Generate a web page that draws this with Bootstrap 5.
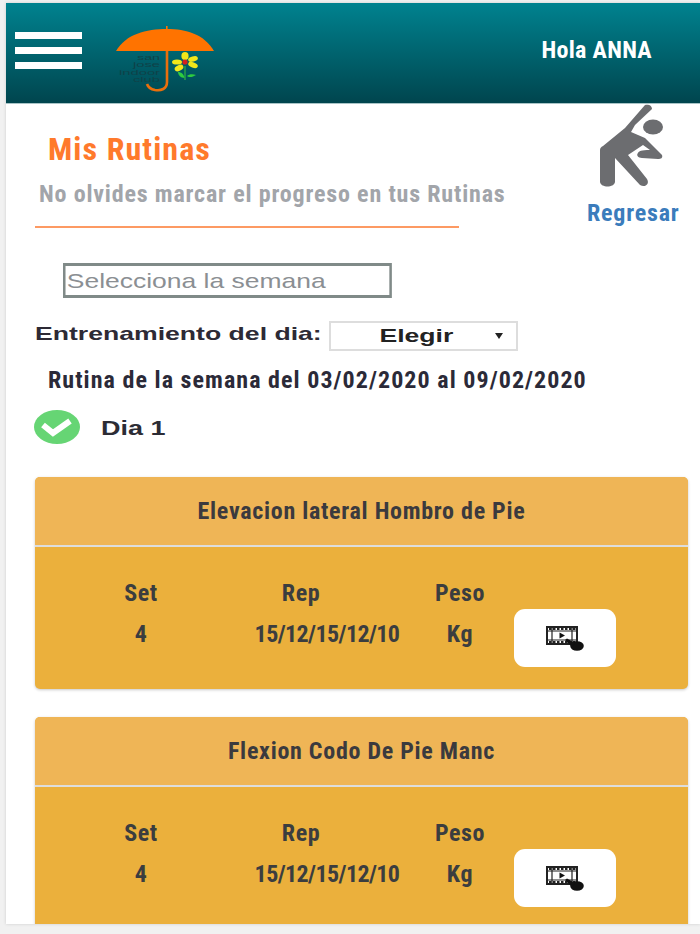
<!DOCTYPE html>
<html lang="es">
<head>
<meta charset="utf-8">
<title>Mis Rutinas</title>
<link href="https://cdn.jsdelivr.net/npm/bootstrap@5.3.0/dist/css/bootstrap.min.css" rel="stylesheet">
<style>
html,body{height:934px;overflow:hidden}
body{background:#f1f1f1;font-family:"Liberation Sans",Arial,sans-serif}
.shell{margin:3px 0 0 6px;height:921px;background:#fff;overflow:hidden;box-shadow:0 0 3px #ccc}
.topbar{height:101px;background:linear-gradient(#00828f,#00454e);padding:0 48px 0 9px;border-bottom:1px solid #a8c4c6}
.burger{width:67px;gap:8px;margin-top:-5px}
.burger span{display:block;height:7px;background:#fff}
.brandmark{width:99px;height:66px;margin-left:34px;margin-top:12px}
.cond{font-family:"Liberation Sans Narrow","Roboto Condensed",Roboto,sans-serif}
.hello{color:#fff;font-weight:700;font-size:24px;letter-spacing:.3px;margin-top:-6px}
.headrow{height:123px}
.headleft{padding:27px 0 0 29px;width:453px;flex:none}
.pagetitle{color:#ff7a2c;font-size:32px;font-weight:700;letter-spacing:1.1px;margin:0 0 0 13px;line-height:36px}
.pagesub{color:#a2a5aa;font-size:24px;font-weight:700;letter-spacing:.82px;margin:13px 0 0 4px;line-height:28px;white-space:nowrap}
.ruler{height:2px;background:#fd9a63;margin-top:18px;width:424px}
.backlink{width:92px;flex:none;margin:0 21px 0 0;color:#3b7cbc;font-size:24px;font-weight:700;text-decoration:none;letter-spacing:.8px;line-height:28px;white-space:nowrap}
.backlink svg{width:64px;height:84px;display:block;margin:0 0 11px 13px}
.weekfield{width:261px;height:35px;margin:36px 0 0 57px;border:3px solid #808a88;border-left-width:2.4px;border-right-width:2.4px;padding:0 1px;font-size:21px;line-height:1;border-radius:0;outline:0;transform:scaleX(1.26);transform-origin:left center}
.weekfield::placeholder{color:#8b8f93;opacity:1}
.dayrow{margin:23px 0 0 29px;height:30px}
.daylabel{font-weight:700;font-size:19px;color:#2d2a35;width:294px;flex:none;margin:0;padding-bottom:3px;white-space:nowrap}
.widen{display:inline-block;transform:scaleX(1.4);transform-origin:left center}
.daypick{width:189px;height:30px;flex:none;border:2px solid #ddd;background:#fff;position:relative;font-weight:700;font-size:19px;color:#222;padding:1px 14px 0 0}
.daypick .widen{transform-origin:center}
.daypick::after{content:"";position:absolute;right:13px;top:10px;border:4px solid transparent;border-top:6px solid #222;border-bottom:0}
.weekline{font-size:24px;font-weight:700;color:#2b2a38;letter-spacing:1.05px;margin:15px 0 0 42px;line-height:28px;white-space:nowrap}
.dayhead{margin:16px 0 0 28px;height:34px;gap:21px}
.dayhead svg{width:46px;height:34px}
.dayname{font-weight:700;font-size:20px;color:#2c2c35;padding-top:1px}
.dayname .widen{transform:scaleX(1.35)}
.cardlist{padding:33px 12px 0 29px;gap:28px}
.workcard{height:212px;background:#ebb03c;border:0;border-radius:5px;box-shadow:0 1px 3px rgba(0,0,0,.22);flex:none;overflow:hidden}
.workcard .card-header{height:70px;background:#efb556;border-bottom:2px solid #ddd;color:#3b3a3e;font-size:24px;font-weight:700;letter-spacing:.72px;border-radius:0;padding:0}
.workcard .card-body{padding:32px 0 0;color:#3b3d3f;font-size:24px;font-weight:700;line-height:28px;letter-spacing:.6px}
.setcell,.repcell,.pesocell{flex:none}
.setcell>div+div,.repcell>div+div,.pesocell>div+div{margin-top:13px}
.setcell{width:212px}
.repcell{width:160px}
.repcell>div:first-child{padding-right:52px}
.repcell>div+div{letter-spacing:-.6px}
.pesocell{width:106px}
.videobtn{width:102px;height:58px;flex:none;background:#fff;border:0;border-radius:11px;margin:30px 0 0 1px;padding:0}
.videobtn svg{width:38px;height:25px;display:block;margin:0 auto}
</style>
</head>
<body>
<div class="shell">
  <nav class="topbar d-flex align-items-center justify-content-between">
    <div class="d-flex align-items-center">
      <div class="burger d-flex flex-column"><span></span><span></span><span></span></div>
      <svg class="brandmark" viewBox="0 0 99 66">
        <rect x="50" y="0" width="1.6" height="6" fill="#ff7300"/>
        <path d="M0 25 C10 8 30 3 51 3 C70 3 88 8 98 25 Z" fill="#ff7300"/>
        <path d="M51 25 V56 C51 63 45 65 39 64 C34 63 32 61 31 58" fill="none" stroke="#e96f0c" stroke-width="2.6"/>
        <g font-family="Liberation Sans" font-size="6.400" fill="#0f4248">
          <text x="21" y="33.500" textLength="23" lengthAdjust="spacingAndGlyphs">san</text>
          <text x="17" y="41" textLength="27" lengthAdjust="spacingAndGlyphs">jose</text>
          <text x="3" y="48.500" textLength="41" lengthAdjust="spacingAndGlyphs">indoor</text>
          <text x="17" y="56" textLength="27" lengthAdjust="spacingAndGlyphs">club</text>
        </g>
        <path d="M69 40 V54" stroke="#28a745" stroke-width="1.4"/>
        <path d="M68.5 52 C65 52 62 49 62 46 C65 46 68 48 68.5 52Z M71 50 C73 48 77 48 80 49 C77 51 73 52 71 50Z" fill="#2ecc40"/>
        <g fill="#f3e61a" transform="translate(0 4)">
          <ellipse cx="69" cy="26" rx="3.6" ry="4"/>
          <ellipse cx="77" cy="29" rx="5" ry="2.6" transform="rotate(-15 77 29)"/>
          <ellipse cx="77" cy="35" rx="5" ry="2.6" transform="rotate(20 77 35)"/>
          <ellipse cx="61" cy="32" rx="5" ry="2.6"/>
          <ellipse cx="63" cy="38" rx="4.6" ry="2.8" transform="rotate(-25 63 38)"/>
        </g>
        <circle cx="69" cy="36" r="2.6" fill="#d5201e"/>
      </svg>
    </div>
    <span class="hello cond">Hola ANNA</span>
  </nav>

  <div class="headrow d-flex justify-content-between">
    <div class="headleft">
      <h1 class="pagetitle cond">Mis Rutinas</h1>
      <p class="pagesub cond">No olvides marcar el progreso en tus Rutinas</p>
      <div class="ruler"></div>
    </div>
    <a class="backlink cond d-block" href="#">
      <svg viewBox="0 0 64 84">
        <path d="M45 1 C48 0 52 1 52 5 L35 21 L31 28 L45 34 L62 51 C63 54 61 55 58 55 L42 54 C38 54 36 51 38 49 C39 47 41 46 50 46 L43 41 L28 51 L47 75 C50 80 45 84 40 81 L15 54 V78 C14 84 1 84 0 78 V46 C0 44 1 43 3 42 L25 24 Z" fill="#6c6d70"/>
        <ellipse cx="53" cy="23" rx="10" ry="7.5" fill="#6c6d70"/>
      </svg>
      Regresar
    </a>
  </div>

  <input class="weekfield form-control d-block" type="text" placeholder="Selecciona la semana">

  <div class="dayrow d-flex align-items-center">
    <label class="daylabel"><span class="widen">Entrenamiento del dia:</span></label>
    <div class="daypick d-flex align-items-center justify-content-center"><span class="widen">Elegir</span></div>
  </div>

  <p class="weekline cond mb-0">Rutina de la semana del 03/02/2020 al 09/02/2020</p>

  <div class="dayhead d-flex align-items-center">
    <svg viewBox="0 0 46 34"><ellipse cx="23" cy="17" rx="23" ry="17" fill="#66d574"/><path d="M9 15 L19 23 L36 11" fill="none" stroke="#fff" stroke-width="6"/></svg>
    <span class="dayname"><span class="widen">Dia 1</span></span>
  </div>

  <div class="cardlist d-flex flex-column">
    <div class="card workcard">
      <div class="card-header cond d-flex align-items-center justify-content-center">Elevacion lateral Hombro de Pie</div>
      <div class="card-body cond d-flex text-center">
        <div class="setcell"><div>Set</div><div>4</div></div>
        <div class="repcell"><div>Rep</div><div>15/12/15/12/10</div></div>
        <div class="pesocell"><div>Peso</div><div>Kg</div></div>
        <button class="videobtn" type="button" aria-label="Video">
          <svg viewBox="0 0 38 25"><rect x="1" y="1" width="30" height="17" fill="none" stroke="#222" stroke-width="2"/><path d="M1 5H31M1 14H31M6 1V18M26 1V18" stroke="#222" stroke-width="1.2"/><path d="M3 3H30M3 16H30" stroke="#222" stroke-width="1.800" stroke-dasharray="2.500 1.500"/><path d="M13.500 6.500 L19 9.500 L13.500 12.500Z" fill="#111"/><ellipse cx="31" cy="20" rx="6.800" ry="4.800" fill="#111"/><path d="M19 14 L21 12.500 L29 17 L26 21Z" fill="#111"/></svg>
        </button>
      </div>
    </div>
    <div class="card workcard">
      <div class="card-header cond d-flex align-items-center justify-content-center">Flexion Codo De Pie Manc</div>
      <div class="card-body cond d-flex text-center">
        <div class="setcell"><div>Set</div><div>4</div></div>
        <div class="repcell"><div>Rep</div><div>15/12/15/12/10</div></div>
        <div class="pesocell"><div>Peso</div><div>Kg</div></div>
        <button class="videobtn" type="button" aria-label="Video">
          <svg viewBox="0 0 38 25"><rect x="1" y="1" width="30" height="17" fill="none" stroke="#222" stroke-width="2"/><path d="M1 5H31M1 14H31M6 1V18M26 1V18" stroke="#222" stroke-width="1.2"/><path d="M3 3H30M3 16H30" stroke="#222" stroke-width="1.800" stroke-dasharray="2.500 1.500"/><path d="M13.500 6.500 L19 9.500 L13.500 12.500Z" fill="#111"/><ellipse cx="31" cy="20" rx="6.800" ry="4.800" fill="#111"/><path d="M19 14 L21 12.500 L29 17 L26 21Z" fill="#111"/></svg>
        </button>
      </div>
    </div>
  </div>
</div>
<script src="https://cdn.jsdelivr.net/npm/bootstrap@5.3.0/dist/js/bootstrap.bundle.min.js"></script>
</body>
</html>
